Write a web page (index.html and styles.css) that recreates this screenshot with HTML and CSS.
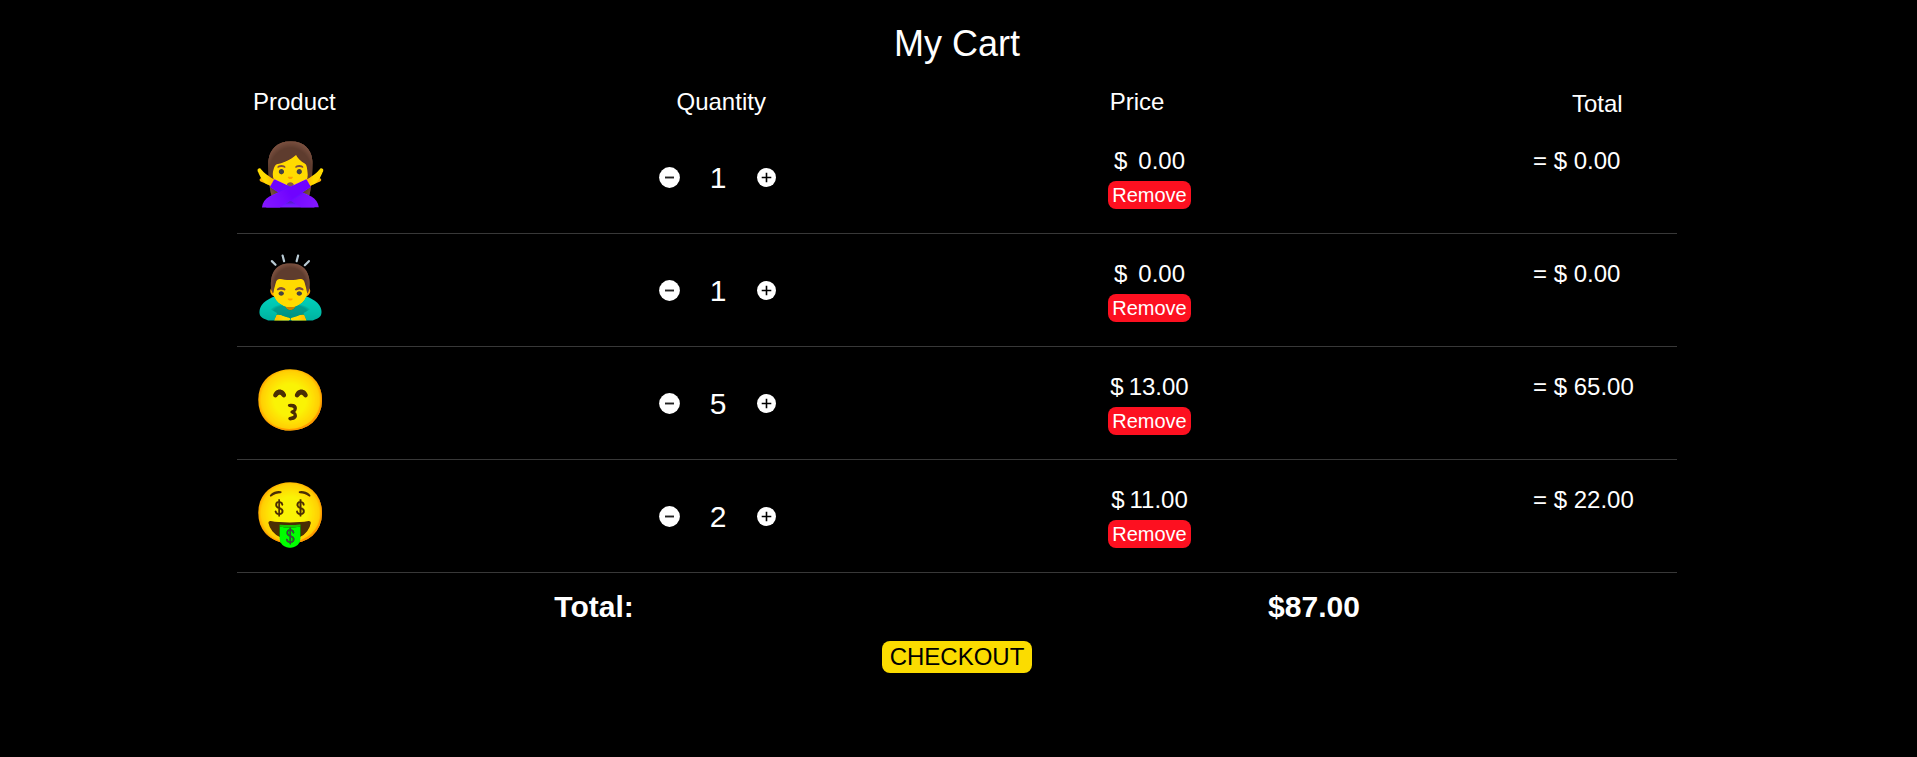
FILE: index.html
```
<!DOCTYPE html>
<html lang="en">
<head>
<meta charset="utf-8">
<title>My Cart</title>
<link rel="stylesheet" href="styles.css">
</head>
<body>
<svg width="0" height="0" class="defs">
  <symbol id="minus" viewBox="0 0 21 21"><circle cx="10.5" cy="10.5" r="10.4" fill="#fff"/><path d="M6 10.5h9" stroke="#222" stroke-width="1.9"/></symbol>
  <symbol id="plus" viewBox="0 0 19 19"><circle cx="9.5" cy="9.5" r="9.5" fill="#fff"/><path d="M4.7 9.5h9.6M9.5 4.7v9.6" stroke="#000" stroke-width="1.6"/></symbol>
</svg>
<main class="cart">
  <h1 class="title">My Cart</h1>
  <div class="grid head">
    <span>Product</span><span class="h-qty">Quantity</span><span class="h-price">Price</span><span class="h-total">Total</span>
  </div>
  <div class="grid row">
    <span class="emoji">🙅‍♀️</span>
    <div class="qty"><svg class="minus"><use href="#minus"/></svg><span class="count">1</span><svg class="plus"><use href="#plus"/></svg></div>
    <div class="price"><div class="amount wide"><span>$</span><span>0.00</span></div><button class="remove">Remove</button></div>
    <span class="sum">= $ 0.00</span>
  </div>
  <div class="grid row">
    <span class="emoji">🙇‍♂️</span>
    <div class="qty"><svg class="minus"><use href="#minus"/></svg><span class="count">1</span><svg class="plus"><use href="#plus"/></svg></div>
    <div class="price"><div class="amount wide"><span>$</span><span>0.00</span></div><button class="remove">Remove</button></div>
    <span class="sum">= $ 0.00</span>
  </div>
  <div class="grid row">
    <span class="emoji">😙</span>
    <div class="qty"><svg class="minus"><use href="#minus"/></svg><span class="count">5</span><svg class="plus"><use href="#plus"/></svg></div>
    <div class="price"><div class="amount"><span>$</span><span>13.00</span></div><button class="remove">Remove</button></div>
    <span class="sum">= $ 65.00</span>
  </div>
  <div class="grid row">
    <span class="emoji">🤑</span>
    <div class="qty"><svg class="minus"><use href="#minus"/></svg><span class="count">2</span><svg class="plus"><use href="#plus"/></svg></div>
    <div class="price"><div class="amount"><span>$</span><span>11.00</span></div><button class="remove">Remove</button></div>
    <span class="sum">= $ 22.00</span>
  </div>
  <div class="totals"><strong>Total:</strong><strong>$87.00</strong></div>
  <button class="checkout">CHECKOUT</button>
</main>
</body>
</html>
```
FILE: styles.css
```
* { box-sizing: border-box; }
body {
  margin: 0;
  background: #000;
  color: #fff;
  font: 24px/28px "Liberation Sans", Arial, sans-serif;
}
.defs { display: block; }
.cart {
  display: flex;
  flex-direction: column;
  width: 1440px;
  margin-left: 237px;
  padding-top: 23px;
}
.title {
  margin: 0;
  font-size: 36px;
  font-weight: 400;
  line-height: 42px;
  text-align: center;
}
.grid {
  display: grid;
  grid-template-columns: 406px 449px 425px 1fr;
  padding-left: 16px;
}
.head { height: 56px; padding-top: 23px; }
.h-qty { padding-left: 17.5px; }
.h-price { padding-left: 1.7px; }
.h-total { padding: 2px 0 0 39px; }
.row {
  height: 113px;
  border-bottom: 1px solid #383838;
}
.emoji {
  padding-top: 19px;
  font: 60px/70px "Noto Color Emoji", sans-serif;
  filter: brightness(1.06) hue-rotate(3deg) saturate(1.25);
}
.qty {
  display: flex;
  align-items: center;
  width: 117px;
  height: 112px;
  justify-content: space-between;
  font-size: 30px;
}
.count { padding: 2px 1px 0 0; }
.qty .minus { width: 21px; height: 21px; }
.qty .plus { width: 19px; height: 19px; }
.price {
  display: flex;
  flex-direction: column;
  align-items: center;
  width: 83px;
  padding-top: 26px;
}
.amount { display: flex; gap: 5px; }
.amount.wide { gap: 11px; }
.remove {
  width: 83px;
  height: 28px;
  margin-top: 6px;
  padding: 0;
  border: 0;
  border-radius: 8px;
  background: #fd1020;
  color: #fff;
  font: 20px/28px "Liberation Sans", Arial, sans-serif;
}
.sum { padding-top: 26px; }
.totals {
  display: grid;
  grid-template-columns: 1fr 1fr;
  height: 68px;
  margin: 0 3px 0 -3px;
  padding-top: 17px;
  font-size: 30px;
  line-height: 34px;
  text-align: center;
}
.checkout {
  align-self: center;
  width: 150px;
  height: 32px;
  padding: 0;
  border: 0;
  border-radius: 8px;
  background: #fbdc00;
  color: #000;
  font: 24px/32px "Liberation Sans", Arial, sans-serif;
}
```
